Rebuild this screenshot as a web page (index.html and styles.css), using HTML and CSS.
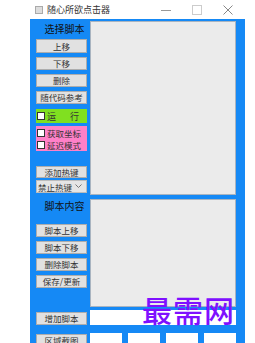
FILE: index.html
```html
<!DOCTYPE html>
<html lang="zh-CN">
  <head>
    <meta charset="UTF-8" />
    <meta name="viewport" content="width=device-width, initial-scale=1.0" />
    <title>随心所欲点击器</title>
    <link rel="stylesheet" href="styles.css">
  </head>

  <body>
    <div class="window">
      <div class="titlebar">
        <span class="app-icon"></span>
        <span class="title">随心所欲点击器</span>
        <span class="controls">
          <svg width="10" height="10" viewBox="0 0 10 10"><path d="M0 5.5h10" stroke="#999" stroke-width="1"/></svg>
          <svg width="10" height="10" viewBox="0 0 10 10"><rect x="0.5" y="0.5" width="9" height="9" fill="none" stroke="#ccc" stroke-width="1"/></svg>
          <svg width="10" height="10" viewBox="0 0 10 10"><path d="M0.5 0.5l9 9M9.5 0.5l-9 9" stroke="#888" stroke-width="1"/></svg>
        </span>
      </div>

      <div class="client">
        <div class="side">
          <div class="label">选择脚本</div>
          <div class="btn first">上移</div>
          <div class="btn">下移</div>
          <div class="btn">删除</div>
          <div class="btn">随代码参考</div>
          <div class="run">
            <span class="check"></span>
            <span class="run-text">运</span>
            <span class="run-text">行</span>
          </div>
          <div class="options">
            <div class="opt"><span class="check"></span>获取坐标</div>
            <div class="opt"><span class="check"></span>延迟模式</div>
          </div>
          <div class="btn hotkey">添加热键</div>
          <div class="select">
            <span>禁止热键</span>
            <svg width="7" height="5" viewBox="0 0 7 5"><path d="M0.5 0.5l3 3l3-3" fill="none" stroke="#777" stroke-width="1"/></svg>
          </div>
          <div class="label second">脚本内容</div>
          <div class="btn first-low">脚本上移</div>
          <div class="btn">脚本下移</div>
          <div class="btn">删除脚本</div>
          <div class="btn">保存/更新</div>
          <div class="btn add">增加脚本</div>
          <div class="btn shot">区域截图</div>
        </div>

        <div class="main">
          <div class="panel list"></div>
          <div class="panel content"></div>
          <div class="input"></div>
          <div class="boxes">
            <div class="box"></div>
            <div class="box"></div>
            <div class="box"></div>
            <div class="box"></div>
          </div>
        </div>
      </div>
    </div>

    <div class="watermark">最需网</div>
  </body>
</html>
```

FILE: styles.css
```css
body {
  margin: 0;
  background: #fff;
  font-family: "Noto Sans CJK SC", "Liberation Sans", sans-serif;
  overflow: hidden;
}

.window {
  margin-left: 30px;
  width: 215px;
  height: 343px;
  overflow: hidden;
}

/* title bar */
.titlebar {
  height: 19px;
  display: flex;
  align-items: center;
  background: #fff;
}

.app-icon {
  width: 6px;
  height: 6px;
  margin-left: 5px;
  border: 1px solid #aaa;
  background: #ddd;
}

.title {
  margin-left: 4px;
  font-size: 9px;
  color: #333;
}

.controls {
  margin-left: auto;
  display: flex;
  gap: 21px;
  margin-right: 12px;
}

/* client area */
.client {
  background: #1589f5;
  display: flex;
  height: 324px;
}

.side {
  width: 51px;
  margin-left: 6px;
  display: flex;
  flex-direction: column;
}

.side > *,
.main > * {
  flex-shrink: 0;
}

.label {
  height: 16px;
  margin-top: 2px;
  font-size: 10px;
  line-height: 16px;
  color: #111;
  text-align: center;
  padding-left: 6px;
}

.label.second {
  margin-top: 5px;
  height: 15px;
  line-height: 15px;
}

.btn {
  box-sizing: border-box;
  height: 13px;
  margin-top: 4px;
  background: #e1e1e1;
  border: 1px solid #adadad;
  font-size: 8.5px;
  line-height: 11px;
  color: #333;
  text-align: center;
  white-space: nowrap;
  overflow: hidden;
}

.btn.first {
  margin-top: 2px;
  height: 14px;
  line-height: 12px;
}

.btn.hotkey {
  margin-top: 15px;
  height: 12px;
  line-height: 10px;
}

.btn.first-low {
  margin-top: 11px;
}

.btn.add {
  margin-top: 24px;
}

.btn.shot {
  margin-top: 9px;
}

.run {
  height: 14px;
  margin-top: 5px;
  background: #80e020;
  display: flex;
  align-items: center;
  font-size: 9px;
  color: #333;
}

.run-text + .run-text {
  margin-left: auto;
  margin-right: 8px;
}

.check {
  box-sizing: border-box;
  width: 8px;
  height: 8px;
  margin: 0 2px 0 1px;
  background: #fff;
  border: 1px solid #333;
  flex-shrink: 0;
}

.options {
  height: 25px;
  margin-top: 3px;
  background: #ff80c8;
  display: flex;
  flex-direction: column;
  justify-content: center;
  gap: 2px;
}

.opt {
  display: flex;
  align-items: center;
  font-size: 8.5px;
  line-height: 10px;
  color: #333;
}

.select {
  box-sizing: border-box;
  height: 13px;
  margin-top: 2px;
  background: #e5e5e5;
  border: 1px solid #bcbcbc;
  display: flex;
  align-items: center;
  justify-content: space-between;
  padding: 0 4px 0 1px;
  font-size: 8.5px;
  color: #333;
}

.main {
  width: 146px;
  margin-left: 3px;
  display: flex;
  flex-direction: column;
}

.panel {
  box-sizing: border-box;
  background: #ebebeb;
  border: 1px solid #a9b4c0;
}

.panel.list {
  margin-top: 2px;
  height: 174px;
}

.panel.content {
  margin-top: 4px;
  height: 108px;
}

.input {
  margin-top: 3px;
  height: 15px;
  background: #fff;
}

.boxes {
  margin-top: 8px;
  display: flex;
  gap: 6px;
}

.box {
  width: 32px;
  height: 20px;
  background: #fff;
}

.watermark {
  position: absolute;
  left: 142px;
  top: 289px;
  font-size: 30px;
  line-height: 40px;
  color: #7f10ff;
  font-weight: 500;
  letter-spacing: 1px;
}
```
